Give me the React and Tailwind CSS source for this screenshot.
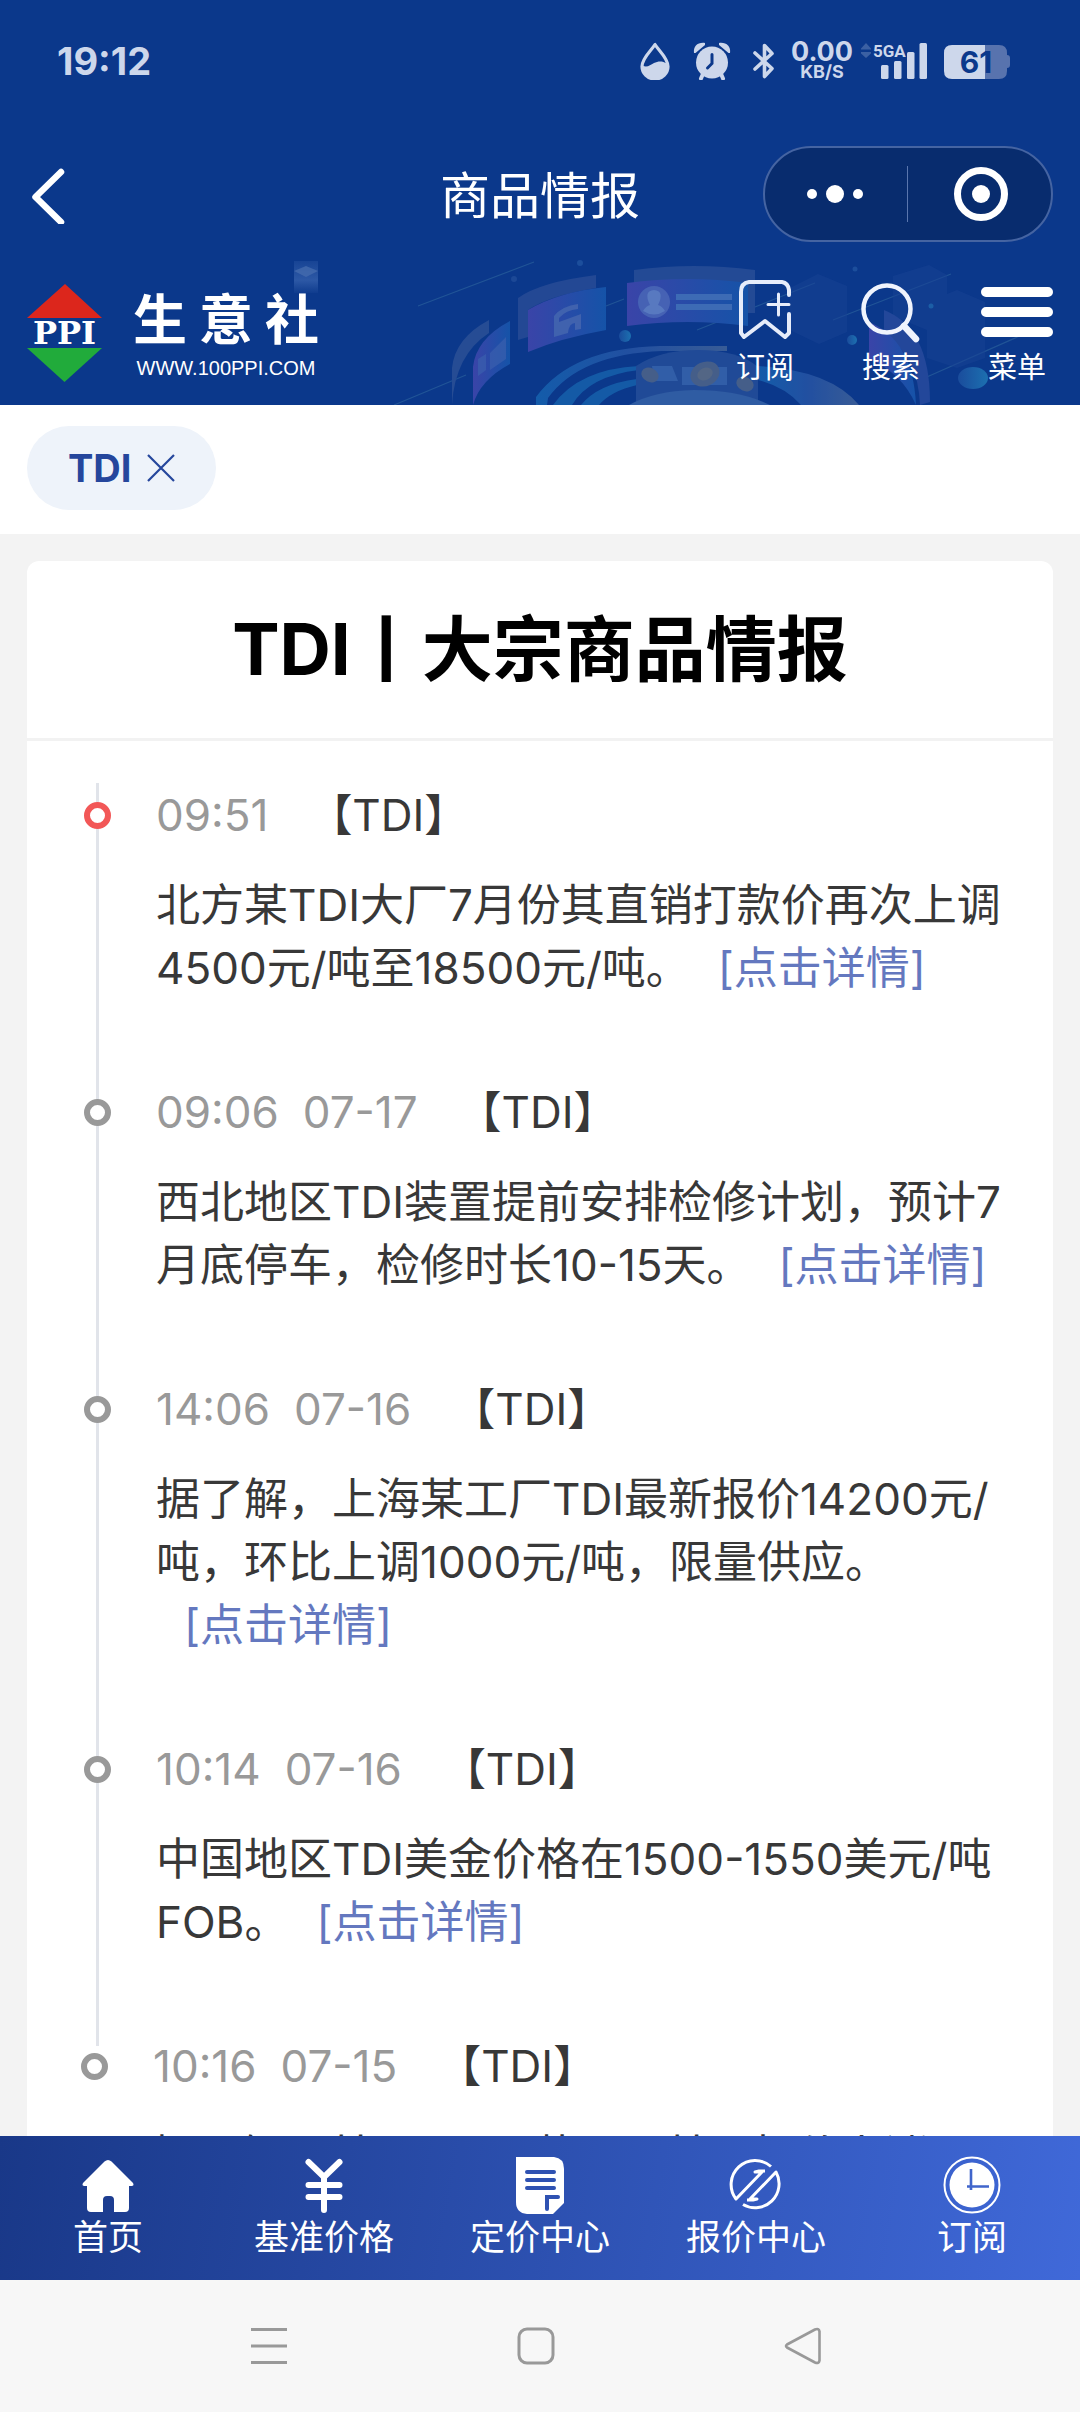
const ITEMS = [
  {
    time: '09:51',
    body: '北方某TDI大厂7月份其直销打款价再次上调4500元/吨至18500元/吨。',
    current: true,
  },
  {
    time: '09:06',
    date: '07-17',
    body: '西北地区TDI装置提前安排检修计划，预计7月底停车，检修时长10-15天。',
  },
  {
    time: '14:06',
    date: '07-16',
    body: '据了解，上海某工厂TDI最新报价14200元/吨，环比上调1000元/吨，限量供应。',
  },
  {
    time: '10:14',
    date: '07-16',
    body: '中国地区TDI美金价格在1500-1550美元/吨FOB。',
  },
  {
    time: '10:16',
    date: '07-15',
    body: '据了解，某工厂TDI装置，某厂报价上涨。',
    last: true,
  },
];

function StatusBar() {
  return (
    <div className="flex h-[122px] items-center justify-between pr-[70px] pl-[57px] text-[#cdd7eb]">
      <time className="text-[38px] leading-[40px] font-bold">19:12</time>
      <div className="flex items-center">
        <svg width="30" height="38" viewBox="0 0 30 38" aria-hidden="true">
          <path d="M15 2.500C11 9 2 16 2 24.500a13 12.500 0 0 0 26 0C28 16 19 9 15 2.500Z" fill="none" stroke="currentColor" strokeWidth="3.200" strokeLinejoin="round" />
          <path d="M3 24c5 1.500 7-1 11-3s8-2.500 13 0.500c2 8-3 15-12 15S1 31 3 24Z" fill="currentColor" />
        </svg>
        <svg className="ml-[23px]" width="38" height="38" viewBox="0 0 38 38" aria-hidden="true">
          <circle cx="19" cy="20.500" r="16" fill="currentColor" />
          <path d="M1 11C0 4 5 0 12 1L12 3 2.500 11Z" fill="currentColor" />
          <path d="M37 11C38 4 33 0 26 1L26 3 35.500 11Z" fill="currentColor" />
          <path d="M9.500 33 8 36.500M28.500 33l1.500 3.500" stroke="currentColor" strokeWidth="4" strokeLinecap="round" />
          <path d="M19 12.500v9l-4.500 4.500" fill="none" stroke="#0b388b" strokeWidth="3" strokeLinecap="round" />
        </svg>
        <svg className="ml-[22px]" width="22" height="38" viewBox="0 0 22 38" aria-hidden="true">
          <path d="M2 11 19 26.500 11.500 34.500V3.500L19 11.500 2 27" fill="none" stroke="currentColor" strokeWidth="3.600" strokeLinejoin="round" strokeLinecap="round" />
        </svg>
        <div className="ml-4 flex w-[62px] flex-col items-center font-bold">
          <span className="text-[27px] leading-[21px]">0.00</span>
          <span className="text-[18px] leading-[19px]">KB/S</span>
        </div>
        <svg className="ml-[7px]" width="68" height="38" viewBox="0 0 68 38" aria-hidden="true">
          <path d="M1 6.500 6 1l5 5.500v1H1ZM1 10h10v1.500L6 16 1 11.500Z" fill="currentColor" opacity=".25" />
          <text x="13" y="15" fontSize="17" fontWeight="700" fontFamily="Roboto, sans-serif" fill="currentColor">5GA</text>
          <rect x="21" y="23" width="7.500" height="14" rx="1.500" fill="currentColor" />
          <rect x="34" y="19" width="7.500" height="18" rx="1.500" fill="currentColor" />
          <rect x="47" y="10" width="7.500" height="27" rx="1.500" fill="currentColor" />
          <rect x="59.500" y="1" width="7.500" height="36" rx="1.500" fill="currentColor" />
        </svg>
        <svg className="ml-4" width="66" height="38" viewBox="0 0 66 38" role="img" aria-label="61%">
          <path d="M41 3h14q8 0 8 8v2q3 0 3 3v7q0 3-3 3v3q0 8-8 8H41Z" fill="#5873ae" />
          <path d="M41 3H8Q0 3 0 11v18q0 8 8 8h33Z" fill="currentColor" />
          <text x="32" y="31" textAnchor="middle" fontSize="30" fontWeight="700" fontFamily="Inter, sans-serif" fill="#0b388b">61</text>
        </svg>
      </div>
    </div>
  );
}

function TitleBar() {
  return (
    <div className="grid grid-cols-[1fr_auto_1fr] items-center px-[27px] pt-6 pb-[18px]">
      <button type="button" aria-label="返回" className="w-10">
        <svg width="40" height="60" viewBox="0 0 40 60">
          <path d="M34 8 8.500 33 34 58" fill="none" stroke="#fff" strokeWidth="6.500" strokeLinecap="round" strokeLinejoin="round" />
        </svg>
      </button>
      <h1 className="pt-1 text-[50px] leading-[60px] text-white">商品情报</h1>
      <div className="flex h-24 w-[290px] items-center justify-self-end rounded-full border-2 border-[#4564a2] bg-[#082c6e]">
        <button type="button" aria-label="更多" className="flex flex-1 items-center justify-center gap-[9px] pr-0.5">
          <span className="size-[10px] rounded-full bg-white" />
          <span className="size-[18px] rounded-full bg-white" />
          <span className="size-[10px] rounded-full bg-white" />
        </button>
        <span className="h-14 w-px bg-[#5a76ae]" />
        <button type="button" aria-label="关闭" className="flex flex-1 items-center justify-center pl-1">
          <span className="flex size-[54px] items-center justify-center rounded-full border-7 border-white">
            <span className="size-[18px] rounded-full bg-white" />
          </span>
        </button>
      </div>
    </div>
  );
}

function BannerArt() {
  return (
    <svg className="absolute inset-0 h-full w-full" viewBox="0 0 1080 145" preserveAspectRatio="xMaxYMid slice" aria-hidden="true">
      <defs>
        <linearGradient id="panel" x1="0" x2="1">
          <stop offset="0" stopColor="#3a44a8" />
          <stop offset="1" stopColor="#1553a8" />
        </linearGradient>
        <linearGradient id="cube" x1="0" x2="0" y1="0" y2="1">
          <stop offset="0" stopColor="#3560ac" stopOpacity=".3" />
          <stop offset=".6" stopColor="#3560ac" stopOpacity=".8" />
          <stop offset="1" stopColor="#3560ac" stopOpacity=".1" />
        </linearGradient>
        <linearGradient id="ring" x1="0" x2="1">
          <stop offset="0" stopColor="#1768b5" />
          <stop offset=".5" stopColor="#2a58a8" />
          <stop offset="1" stopColor="#48689a" />
        </linearGradient>
        <linearGradient id="orb" x1="0" x2="1">
          <stop offset="0" stopColor="#1a4c9c" />
          <stop offset="1" stopColor="#1c70b0" />
        </linearGradient>
      </defs>
      <rect x="294" y="1" width="24" height="32" fill="url(#cube)" />
      <path d="m294 11 12-5 12 5-12 6Z" fill="#456cae" opacity=".8" />
      <g stroke="#2a609c" strokeWidth="1.200" opacity=".7">
        <path d="M418 46 534 2M394 145l72-30M606 46l18-7M697 70l118-47M833 60l118-46M920 120l102-45" />
      </g>
      <path d="M452 145V108q3-30 37-48v13q-34 22-37 72Z" fill="#264c94" />
      <path d="M473 145v-38q3-28 37-46v43q-30 16-37 41Z" fill="url(#panel)" />
      <path d="m490 93 16-16v22l-16 11ZM478 99l8-5v16l-8 6Z" fill="#3a5fae" opacity=".7" />
      <path d="M518 80V38q22-16 78-23v13q-48 8-68 22v27Z" fill="#234894" />
      <path d="M528 92V50q30-18 78-23v43q-45 8-78 22Z" fill="url(#panel)" />
      <path d="M554 77V56q8-10 24-12v5q-12 1-19 9v4l22-8v15l-6 1v-7q-6 0-7 10Z" fill="#4062ae" />
      <path d="M634 24V10q60-8 121 0v43h-10V24Z" fill="#234a95" />
      <path d="M627 66V23q60-8 121 0v43q-60-8-121 0Z" fill="url(#panel)" />
      <circle cx="654" cy="42" r="16" fill="#4662b4" />
      <path d="M643 51q3-5 7-6-7-14 4-15 11 1 4 15 4 1 7 6-11 7-22 0Z" fill="#5879c0" />
      <path d="M676 37h56M676 47h56" stroke="#3d6bb5" strokeWidth="6" />
      <g opacity=".75">
        <path d="M536 137Q572 88 660 86h67v5h-65q-82 3-114 47l-1 7h-11Z" fill="url(#ring)" />
        <path d="M553 145q26-36 86-39v4q-50 6-67 35ZM581 145q17-21 56-26v6q-26 6-38 20Z" fill="#1766b0" />
        <path d="M636 145V106q24-16 62-16 40 0 60 17v38Z" fill="#28519b" />
        <path d="M652 106h20l6 15h-24ZM682 107h45v18h-45Z" fill="#3e6bb2" />
        <path d="M629 145q25-14 65-15 46 0 76 15Z" fill="#3c68ab" />
        <path d="M758 120v-14q72 4 101 39h-58q-16-18-43-25Z" fill="url(#ring)" />
        <ellipse cx="650" cy="115" rx="9" ry="7" fill="#596b89" transform="rotate(25 650 115)" />
        <ellipse cx="705" cy="114" rx="15" ry="12" fill="#596b89" transform="rotate(-25 705 114)" />
        <ellipse cx="705" cy="114" rx="8" ry="6" fill="#6b7683" transform="rotate(-25 705 114)" />
        <ellipse cx="745" cy="124" rx="9" ry="7" fill="#596b89" transform="rotate(25 745 124)" />
      </g>
      <g fill="#174294" opacity=".55">
        <path d="m790 28 28-14 29 12v46l-28 12-29-14ZM893 16l36-11 18 10v45l-20 10-34-14ZM927 42l30-12 28 12v56l-28 10-30-10Z" />
      </g>
      <path d="M884 50q46 18 46 92l-10 3q-2-50-36-70Z" fill="#23479a" />
      <path d="M869 99V62q44 18 47 83-14-32-47-46Z" fill="url(#panel)" />
      <circle cx="625" cy="76" r="6" fill="url(#orb)" />
      <circle cx="852" cy="80" r="5" fill="url(#orb)" />
      <ellipse cx="973" cy="118" rx="15" ry="11" fill="url(#orb)" />
      <circle cx="580" cy="3" r="3" fill="#1c4e9c" />
      <circle cx="855" cy="9" r="2.500" fill="#1c4e9c" />
      <circle cx="931" cy="46" r="2.500" fill="#1c5ea6" />
      <circle cx="514" cy="19" r="3" fill="#1c4896" />
    </svg>
  );
}

function Logo() {
  return (
    <a href="#home" aria-label="生意社" className="flex items-center gap-[31px] text-white">
      <svg width="75" height="98" viewBox="0 0 75 98">
        <path d="M38 0 75 34H0Z" fill="#dc261c" />
        <path d="M0 64h75L37.500 98Z" fill="#21ab3b" />
        <text x="37.500" y="60" textAnchor="middle" fontSize="32" fontWeight="700" fontFamily="'DejaVu Serif', serif" fill="#fff">PPI</text>
      </svg>
      <span className="flex flex-col items-center pt-1">
        <span className="flex gap-3 text-[54px] leading-[60px] font-bold">
          <span>生</span>
          <span>意</span>
          <span>社</span>
        </span>
        <span className="mt-[5px] font-['Liberation_Sans'] text-[20px] leading-6">WWW.100PPI.COM</span>
      </span>
    </a>
  );
}

function BannerAction({ label, children }) {
  return (
    <button type="button" className="flex w-[72px] flex-col items-center gap-0.5 text-[29px] leading-[44px] text-white">
      {children}
      <span>{label}</span>
    </button>
  );
}

function Banner() {
  return (
    <div className="relative">
      <BannerArt />
      <div className="relative flex items-start justify-between px-[27px] pt-[18px] pb-[15px]">
        <div className="pt-[6px]">
          <Logo />
        </div>
        <div className="flex gap-[54px]">
          <BannerAction label="订阅">
            <svg width="56" height="66" viewBox="0 0 56 66" fill="none" stroke="#e6ecfa" strokeWidth="4" strokeLinejoin="round" strokeLinecap="round">
              <path d="M52 17v-5q-1-7-7-8H12Q4 5 4 14v41l3 4 21-16 20 16 4-4V36" />
              <path d="M31 26.500h21M41.500 16v21" strokeWidth="3" />
            </svg>
          </BannerAction>
          <BannerAction label="搜索">
            <svg width="60" height="66" viewBox="0 0 60 66" fill="none" stroke="#f0f4fd" strokeLinecap="round">
              <circle cx="26" cy="31" r="23.500" strokeWidth="4.500" />
              <path d="M43 48 55 61" strokeWidth="6.500" />
            </svg>
          </BannerAction>
          <BannerAction label="菜单">
            <svg width="72" height="66" viewBox="0 0 72 66" stroke="#fff" strokeWidth="10" strokeLinecap="round">
              <path d="M5 14h62M5 34h62M5 54h62" />
            </svg>
          </BannerAction>
        </div>
      </div>
    </div>
  );
}

function FilterBar() {
  return (
    <div className="bg-white px-[27px] pt-[21px] pb-6">
      <button type="button" aria-label="TDI 移除" className="flex h-21 items-center gap-4 rounded-full bg-[#eef3fa] px-[41px] text-[38px] leading-[44px] font-bold text-[#25469c]">
        TDI
        <svg width="28" height="28" viewBox="0 0 28 28" fill="none" stroke="currentColor" strokeWidth="2.200">
          <path d="m1 1 26 26M27 1 1 27" />
        </svg>
      </button>
    </div>
  );
}

function TimelineItem({ item, first }) {
  const { time, date, body, current, last } = item;
  return (
    <li className={`ml-[69px] pb-[92px] pl-[57px] ${last ? '' : 'border-l-3 border-[#e1e4ea]'} ${first ? 'pt-3' : ''}`}>
      <div className="relative flex h-10 items-center leading-[40px]">
        <span
          className={`absolute top-[7px] -left-[72px] size-[27px] rounded-full border-6 bg-white ${current ? 'border-[#f25757]' : 'border-[#999]'}`}
        />
        <span className="flex gap-6 text-[#999]">
          <time>{time}</time>
          {date && <time>{date}</time>}
        </span>
        <span className="ml-10">【TDI】</span>
      </div>
      <p className="mt-[39px] leading-[63px]">
        {body}
        <a href="#detail" className="ml-7 inline-block text-[#6478bf]">[点击详情]</a>
      </p>
    </li>
  );
}

const NAV = [
  {
    label: '首页',
    icon: (
      <svg width="58" height="58" viewBox="0 0 58 58" fill="#fff">
        <path d="M25.500 5.500q3.500-3 7 0L54 27q1.500 3-1.500 3H50v22q0 4-4 4H35V44q0-4-4-4h-3q-4 0-4 4v12H12q-4 0-4-4V30H5.500Q2.500 30 4 27Z" />
      </svg>
    ),
  },
  {
    label: '基准价格',
    icon: (
      <svg width="58" height="58" viewBox="0 0 58 58" fill="none" stroke="#fff" strokeWidth="6" strokeLinecap="round">
        <path d="m13.500 6 15.500 15L44.500 6M29 21v33" strokeLinejoin="round" />
        <path d="M13.500 29h31M13.500 41h31" />
      </svg>
    ),
  },
  {
    label: '定价中心',
    icon: (
      <svg width="58" height="58" viewBox="0 0 58 58">
        <path d="M5 1h38q10 1 10 12v34L42 58H16Q5 57 5 46Z" fill="#fff" />
        <path d="M16 16h27M16 24h27M16 32h27M47 41H36v12" fill="none" stroke="#2f52b2" strokeWidth="4" strokeLinecap="round" />
      </svg>
    ),
  },
  {
    label: '报价中心',
    icon: (
      <svg width="58" height="58" viewBox="0 0 58 58" fill="none" stroke="#fff" strokeWidth="3" strokeLinejoin="round">
        <path d="M44 10.500A24 24 0 0 0 9 43l26-27h-7l4-1h6" />
        <path d="M16 48.500A24 24 0 0 0 49 16L23 43h7l-4 1h-6" />
      </svg>
    ),
  },
  {
    label: '订阅',
    icon: (
      <svg width="58" height="58" viewBox="0 0 58 58">
        <circle cx="29" cy="29" r="27.500" fill="none" stroke="#fff" strokeWidth="2" />
        <circle cx="29" cy="29" r="22.500" fill="#fff" />
        <path d="M28 13v21M24 30.500h22" stroke="#4065cb" strokeWidth="2.600" />
      </svg>
    ),
  },
];

function BottomNav() {
  return (
    <nav className="grid shrink-0 grid-cols-5 bg-linear-100 from-[#193888] to-[#4069d9] py-5">
      {NAV.map(({ label, icon }) => (
        <a key={label} href={`#${label}`} className="flex flex-col items-center text-[35px] leading-[46px] text-white">
          {icon}
          <span>{label}</span>
        </a>
      ))}
    </nav>
  );
}

function SystemBar() {
  return (
    <div className="grid h-33 shrink-0 grid-cols-3 place-items-center bg-[#f7f7f7] pr-36 pl-34">
      <button type="button" aria-label="最近任务">
        <svg width="36" height="38" viewBox="0 0 36 38" stroke="#999" strokeWidth="3">
          <path d="M0 2.500h36M0 19h36M0 35.500h36" />
        </svg>
      </button>
      <button type="button" aria-label="主屏幕">
        <svg width="38" height="38" viewBox="0 0 38 38" fill="none" stroke="#999" strokeWidth="3">
          <rect x="2" y="2" width="34" height="34" rx="8" />
        </svg>
      </button>
      <button type="button" aria-label="返回上一级">
        <svg width="38" height="38" viewBox="0 0 38 38" fill="none" stroke="#999" strokeWidth="2.600" strokeLinejoin="round">
          <path d="M3 17.500 31 2.500q4-1.500 4.500 2v29q-.5 3.500-4.500 2L3 20.500q-2-1.500 0-3Z" />
        </svg>
      </button>
    </div>
  );
}

export default function App() {
  return (
    <div className="flex h-screen flex-col overflow-hidden bg-[#f3f3f3] font-[Inter,'Noto_Sans_CJK_SC',sans-serif]">
      <header className="shrink-0 bg-[#0b388b]">
        <StatusBar />
        <TitleBar />
        <Banner />
      </header>
      <main className="min-h-0 flex-1 overflow-hidden">
        <FilterBar />
        <section className="mx-[27px] mt-[27px] rounded-t-xl bg-white">
          <h2 className="border-b-3 border-[#f2f2f2] py-11 text-center text-[71px] leading-[89px] font-bold text-black">TDI丨大宗商品情报</h2>
          <ol className="pt-[42px] pr-[38px] text-[44px] text-[#383838]">
            {ITEMS.map((item, i) => (
              <TimelineItem key={item.time} item={item} first={i === 0} />
            ))}
          </ol>
        </section>
      </main>
      <BottomNav />
      <SystemBar />
    </div>
  );
}
